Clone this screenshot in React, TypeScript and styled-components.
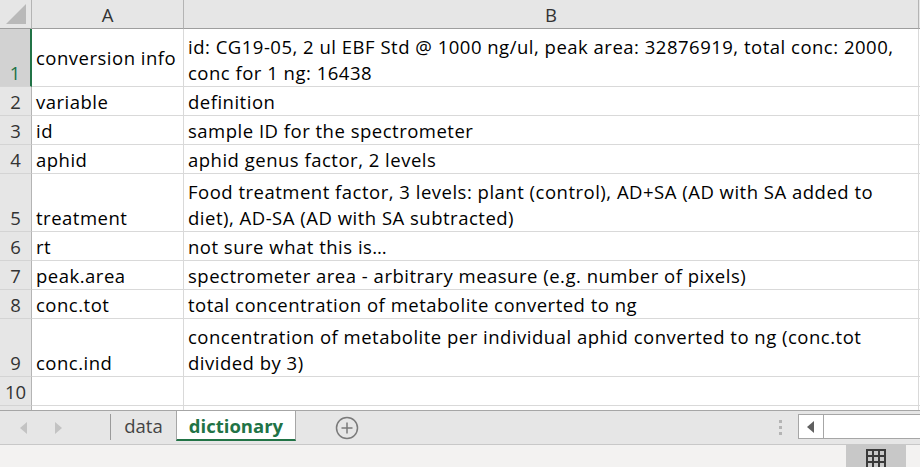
import React from 'react';
import styled, { createGlobalStyle } from 'styled-components';

const GlobalStyle = createGlobalStyle`
  html, body {
    margin: 0;
    padding: 0;
    background: #ffffff;
  }
  body {
    font-family: 'Open Sans', 'Noto Sans', sans-serif;
    overflow: hidden;
  }
`;

const rows = [
  { n: 1, a: 'conversion info', b: 'id: CG19-05, 2 ul EBF Std @ 1000 ng/ul, peak area: 32876919, total conc: 2000, conc for 1 ng: 16438', h: 58, center: true, selected: true },
  { n: 2, a: 'variable', b: 'definition', h: 29 },
  { n: 3, a: 'id', b: 'sample ID for the spectrometer', h: 29 },
  { n: 4, a: 'aphid', b: 'aphid genus factor, 2 levels', h: 29 },
  { n: 5, a: 'treatment', b: 'Food treatment factor, 3 levels: plant (control), AD+SA (AD with SA added to diet), AD-SA (AD with SA subtracted)', h: 58 },
  { n: 6, a: 'rt', b: 'not sure what this is…', h: 29 },
  { n: 7, a: 'peak.area', b: 'spectrometer area - arbitrary measure (e.g. number of pixels)', h: 29 },
  { n: 8, a: 'conc.tot', b: 'total concentration of metabolite converted to ng', h: 29 },
  { n: 9, a: 'conc.ind', b: 'concentration of metabolite per individual aphid converted to ng (conc.tot divided by 3)', h: 58 },
  { n: 10, a: '', b: '', h: 29 },
];

const App = () => {
  return (
    <Page>
      <GlobalStyle />
      <Sheet>
        <HeaderRow>
          <Corner>
            <svg width="21" height="21" viewBox="0 0 21 21">
              <polygon points="20,0 20,20 0,20" fill="#b9b9b9" />
            </svg>
          </Corner>
          <ColHeader $width={152}>A</ColHeader>
          <ColHeader $width={735}>B</ColHeader>
          <HeaderFiller />
        </HeaderRow>
        {rows.map((r) => (
          <Row key={r.n} $height={r.h}>
            <RowHead $selected={r.selected}>{r.n}</RowHead>
            <Cell $width={152} $center={r.center}>{r.a}</Cell>
            <Cell $width={735}>{r.b}</Cell>
            <Filler />
          </Row>
        ))}
        <Row $height={10}>
          <RowHead />
          <Cell $width={152} />
          <Cell $width={735} />
          <Filler />
        </Row>
      </Sheet>

      <TabBar>
        <NavArrows>
          <svg width="8" height="12" viewBox="0 0 8 12">
            <polygon points="7,0 7,12 0,6" fill="#c3c3c3" />
          </svg>
          <svg width="8" height="12" viewBox="0 0 8 12">
            <polygon points="1,0 1,12 8,6" fill="#c3c3c3" />
          </svg>
        </NavArrows>
        <TabDivider />
        <Tab>data</Tab>
        <Tab $active>dictionary</Tab>
        <AddSheet>
          <svg width="24" height="24" viewBox="0 0 24 24">
            <circle cx="12" cy="12" r="10.5" fill="none" stroke="#7a7a7a" strokeWidth="1.5" />
            <line x1="12" y1="6.5" x2="12" y2="17.5" stroke="#7a7a7a" strokeWidth="1.5" />
            <line x1="6.5" y1="12" x2="17.5" y2="12" stroke="#7a7a7a" strokeWidth="1.5" />
          </svg>
        </AddSheet>
        <Spacer />
        <Grip>
          <i />
          <i />
          <i />
        </Grip>
        <HScroll>
          <ScrollButton>
            <svg width="8" height="12" viewBox="0 0 8 12">
              <polygon points="7,0 7,12 0,6" fill="#606060" />
            </svg>
          </ScrollButton>
          <ScrollTrack />
        </HScroll>
      </TabBar>

      <StatusBar>
        <ViewButton>
          <svg width="20" height="22" viewBox="0 0 20 22">
            <rect x="1" y="1" width="18" height="24" fill="#c8c8c8" stroke="#3a3a3a" strokeWidth="2" />
            <line x1="7" y1="0" x2="7" y2="22" stroke="#3a3a3a" strokeWidth="2" />
            <line x1="13" y1="0" x2="13" y2="22" stroke="#3a3a3a" strokeWidth="2" />
            <line x1="0" y1="7" x2="20" y2="7" stroke="#3a3a3a" strokeWidth="2" />
            <line x1="0" y1="13" x2="20" y2="13" stroke="#3a3a3a" strokeWidth="2" />
            <line x1="0" y1="19" x2="20" y2="19" stroke="#3a3a3a" strokeWidth="2" />
          </svg>
        </ViewButton>
      </StatusBar>
    </Page>
  );
};

export default App;

const Page = styled.div`
  display: flex;
  flex-direction: column;
  height: 100vh;
  width: 920px;
`;

const Sheet = styled.div`
  height: 410px;
  flex-shrink: 0;
  overflow: hidden;
  display: flex;
  flex-direction: column;
`;

const HeaderRow = styled.div`
  display: flex;
  height: 29px;
  flex-shrink: 0;
  background: #e6e6e6;
`;

const Corner = styled.div`
  width: 32px;
  box-sizing: border-box;
  border-right: 1px solid #b4b4b4;
  border-bottom: 1px solid #9e9e9e;
  display: flex;
  align-items: flex-end;
  justify-content: flex-end;
  padding: 0 4px 3px 0;
`;

const ColHeader = styled.div<{ $width: number }>`
  width: ${({ $width }) => $width}px;
  box-sizing: border-box;
  border-right: 1px solid #b4b4b4;
  border-bottom: 1px solid #9e9e9e;
  display: flex;
  align-items: center;
  justify-content: center;
  font-size: 18.5px;
  color: #333333;
`;

const HeaderFiller = styled.div`
  flex: 1;
  border-bottom: 1px solid #9e9e9e;
`;

const Row = styled.div<{ $height: number }>`
  display: flex;
  height: ${({ $height }) => $height}px;
  flex-shrink: 0;
`;

const RowHead = styled.div<{ $selected?: boolean }>`
  width: 32px;
  box-sizing: border-box;
  background: ${({ $selected }) => ($selected ? '#d2d2d2' : '#e6e6e6')};
  color: ${({ $selected }) => ($selected ? '#217346' : '#333333')};
  border-right: ${({ $selected }) => ($selected ? '2px solid #217346' : '1px solid #b4b4b4')};
  border-bottom: 1px solid #d4d4d4;
  display: flex;
  align-items: flex-end;
  justify-content: center;
  font-size: 18.5px;
  line-height: 26px;
`;

const Cell = styled.div<{ $width: number; $center?: boolean }>`
  width: ${({ $width }) => $width}px;
  box-sizing: border-box;
  border-right: 1px solid #d9d9d9;
  border-bottom: 1px solid #d9d9d9;
  padding: 0 3px 0 4px;
  display: flex;
  align-items: ${({ $center }) => ($center ? 'center' : 'flex-end')};
  font-size: 18.5px;
  letter-spacing: 0.5px;
  line-height: 26px;
  color: #000000;
  overflow: hidden;
`;

const Filler = styled.div`
  flex: 1;
  border-bottom: 1px solid #d9d9d9;
`;

const TabBar = styled.div`
  height: 33px;
  flex-shrink: 0;
  display: flex;
  align-items: stretch;
  background: #e6e6e6;
  border-top: 1px solid #a6a6a6;
  border-bottom: 1px solid #c8c8c8;
`;

const NavArrows = styled.div`
  width: 110px;
  display: flex;
  align-items: center;
  gap: 26px;
  padding-left: 20px;
  box-sizing: border-box;
`;

const TabDivider = styled.div`
  width: 1px;
  margin: 3px 0 4px;
  background: #9a9a9a;
`;

const Tab = styled.div<{ $active?: boolean }>`
  display: flex;
  align-items: center;
  justify-content: center;
  padding: 1px 0 0;
  box-sizing: border-box;
  font-size: 18.5px;
  font-weight: ${({ $active }) => ($active ? 700 : 400)};
  color: ${({ $active }) => ($active ? '#217346' : '#444444')};
  background: ${({ $active }) => ($active ? '#ffffff' : 'transparent')};
  border-left: 1px solid ${({ $active }) => ($active ? '#a6a6a6' : 'transparent')};
  border-right: 1px solid ${({ $active }) => ($active ? '#a6a6a6' : 'transparent')};
  border-bottom: 2px solid ${({ $active }) => ($active ? '#217346' : 'transparent')};
  margin-bottom: 3px;
  width: ${({ $active }) => ($active ? '120px' : '65px')};
`;

const AddSheet = styled.div`
  display: flex;
  align-items: center;
  margin-left: 39px;
`;

const Spacer = styled.div`
  flex: 1;
`;

const Grip = styled.div`
  display: flex;
  flex-direction: column;
  justify-content: center;
  gap: 3px;
  margin-right: 16px;

  i {
    display: block;
    width: 3px;
    height: 3px;
    background: #b4b4b4;
  }
`;

const HScroll = styled.div`
  width: 122px;
  margin: 3px 0 5px;
  display: flex;
  background: #ffffff;
  border: 1px solid #a6a6a6;
  border-right: none;
  box-sizing: border-box;
`;

const ScrollButton = styled.div`
  width: 24px;
  display: flex;
  align-items: center;
  justify-content: center;
  border-right: 1px solid #a6a6a6;
`;

const ScrollTrack = styled.div`
  flex: 1;
`;

const StatusBar = styled.div`
  flex: 1;
  background: #f3f2f1;
  display: flex;
  justify-content: flex-end;
  padding-right: 14px;
`;

const ViewButton = styled.div`
  width: 60px;
  background: #c8c8c8;
  display: flex;
  justify-content: center;
  padding-top: 4px;
  box-sizing: border-box;
  overflow: hidden;
`;
